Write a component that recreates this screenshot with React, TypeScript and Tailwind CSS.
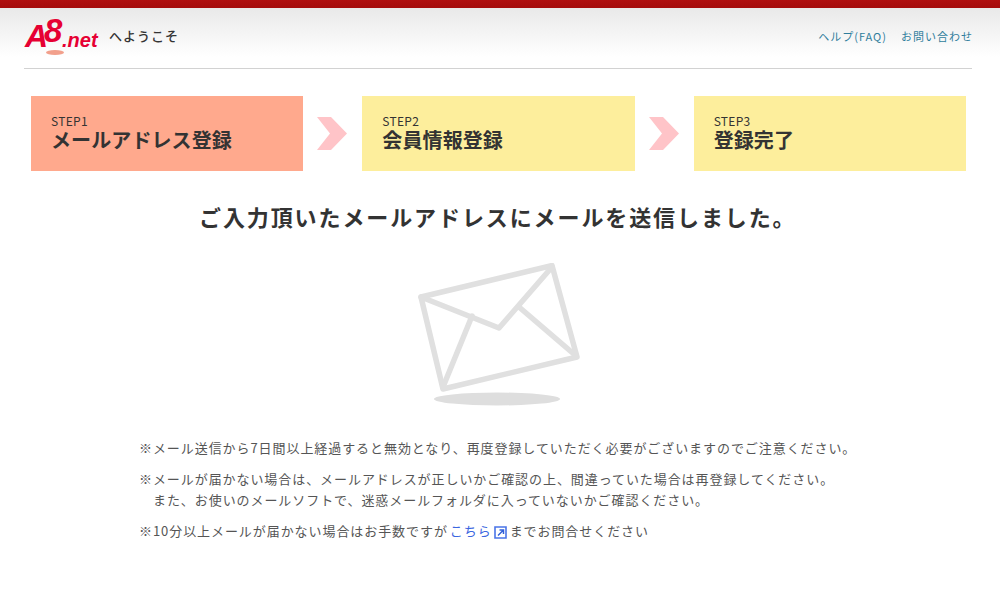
import React from 'react';

const jp = "font-['Noto_Sans_CJK_JP','Noto_Sans',sans-serif]";

const steps = [
  { no: 'STEP1', name: 'メールアドレス登録', active: true },
  { no: 'STEP2', name: '会員情報登録', active: false },
  { no: 'STEP3', name: '登録完了', active: false },
];

const Arrow = () => (
  <svg width="30" height="33" viewBox="0 0 30 33" className="shrink-0 ml-[14px] mr-[15px]">
    <path d="M0 0H14L30 16.5L14 33H0L13 16.5Z" fill="#ffc4c8" />
  </svg>
);

const Mail = () => (
  <svg width="164" height="146" viewBox="0 0 164 146" className="block">
    <g fill="none" stroke="#e0e0e0" strokeWidth="5.5" strokeLinejoin="round" strokeLinecap="round">
      <path d="M4 32L135 0.5L160 92L26 124Z" transform="translate(0 2)" />
      <path d="M4 34L82 65L135 4" />
      <path d="M55 53L26 124" />
      <path d="M102 44L158 92" />
    </g>
    <ellipse cx="80" cy="136" rx="63" ry="6.5" fill="#dedede" />
  </svg>
);

const App: React.FC = () => {
  return (
    <div className={`${jp} w-[1000px] h-[589px] bg-white overflow-hidden text-[#555]`}>
      <div className="h-2 bg-gradient-to-b from-[#b01010] to-[#a50c0c]" />

      <header className="h-[61px] bg-gradient-to-b from-[#e9e9e9] to-white to-80%">
        <div className="ml-6 mr-7 h-[61px] flex justify-between border-b border-[#d2d2d2]">
          <div className="flex items-start pt-[9px]">
            <div className="relative w-[80px] h-[40px] italic font-bold text-[#e60033] font-['Liberation_Sans',sans-serif]">
              <span className="absolute left-[1px] top-[1px] text-[32px] leading-[36px]">A</span>
              <span className="absolute left-[20px] top-[-4px] text-[33px] leading-[36px]">8</span>
              <span className="absolute left-[38px] top-[11px] text-[20px] leading-[24px]">.net</span>
              <span className="absolute left-[22px] top-[33px] w-[18px] h-[5px] rounded-[50%] bg-[#f2a08c]" />
            </div>
            <span className="ml-[5px] mt-[9px] text-[13px] leading-[19px] font-medium tracking-[1px] text-[#333]">へようこそ</span>
          </div>
          <nav className="flex gap-[14px] -mr-px pt-[20px] text-[11px] leading-[17px] tracking-[1px] text-[#2f7d9c]">
            <a>ヘルプ(FAQ)</a>
            <a>お問い合わせ</a>
          </nav>
        </div>
      </header>

      <div className="mt-[27px] ml-[31px] w-[935px] flex items-center">
        {steps.map((s, i) => (
          <React.Fragment key={s.no}>
            {i > 0 && <Arrow />}
            <div className={`flex-1 h-[75px] pl-[20px] pt-[18px] text-[#333] ${s.active ? 'bg-[#ffa98d]' : 'bg-[#fdee9c]'}`}>
              <p className="text-[12px] leading-[14px] tracking-[0.3px]">{s.no}</p>
              <p className="text-[20px] leading-[24px] font-bold tracking-[0.1px]">{s.name}</p>
            </div>
          </React.Fragment>
        ))}
      </div>

      <h1 className="mt-[29px] ml-[199px] text-[22px] leading-[32px] font-bold tracking-[1.9px] text-[#333] whitespace-nowrap">
        ご入力頂いたメールアドレスにメールを送信しました。
      </h1>

      <div className="mt-[31px] ml-[417px]">
        <Mail />
      </div>

      <div className="mt-[28px] ml-[139px] text-[13px] leading-[21px] tracking-[0.93px] whitespace-nowrap">
        <p>※メール送信から7日間以上経過すると無効となり、再度登録していただく必要がございますのでご注意ください。</p>
        <p className="mt-[10px]">※メールが届かない場合は、メールアドレスが正しいかご確認の上、間違っていた場合は再登録してください。</p>
        <p className="pl-[14px]">また、お使いのメールソフトで、迷惑メールフォルダに入っていないかご確認ください。</p>
        <p className="mt-[10px] flex items-center">
          ※10分以上メールが届かない場合はお手数ですが
          <a className="ml-[2px] text-[#3b66e0]">こちら</a>
          <svg width="13" height="13" viewBox="0 0 13 13" className="ml-[2px] mr-[3px] mt-[4px]">
            <path d="M1 1H12V12H1Z" fill="none" stroke="#4a74e8" strokeWidth="1.6" />
            <path d="M4 9.5L9 4.5M5.5 4H9.5V8" fill="none" stroke="#3160d8" strokeWidth="1.5" />
          </svg>
          までお問合せください
        </p>
      </div>
    </div>
  );
};

export default App;
